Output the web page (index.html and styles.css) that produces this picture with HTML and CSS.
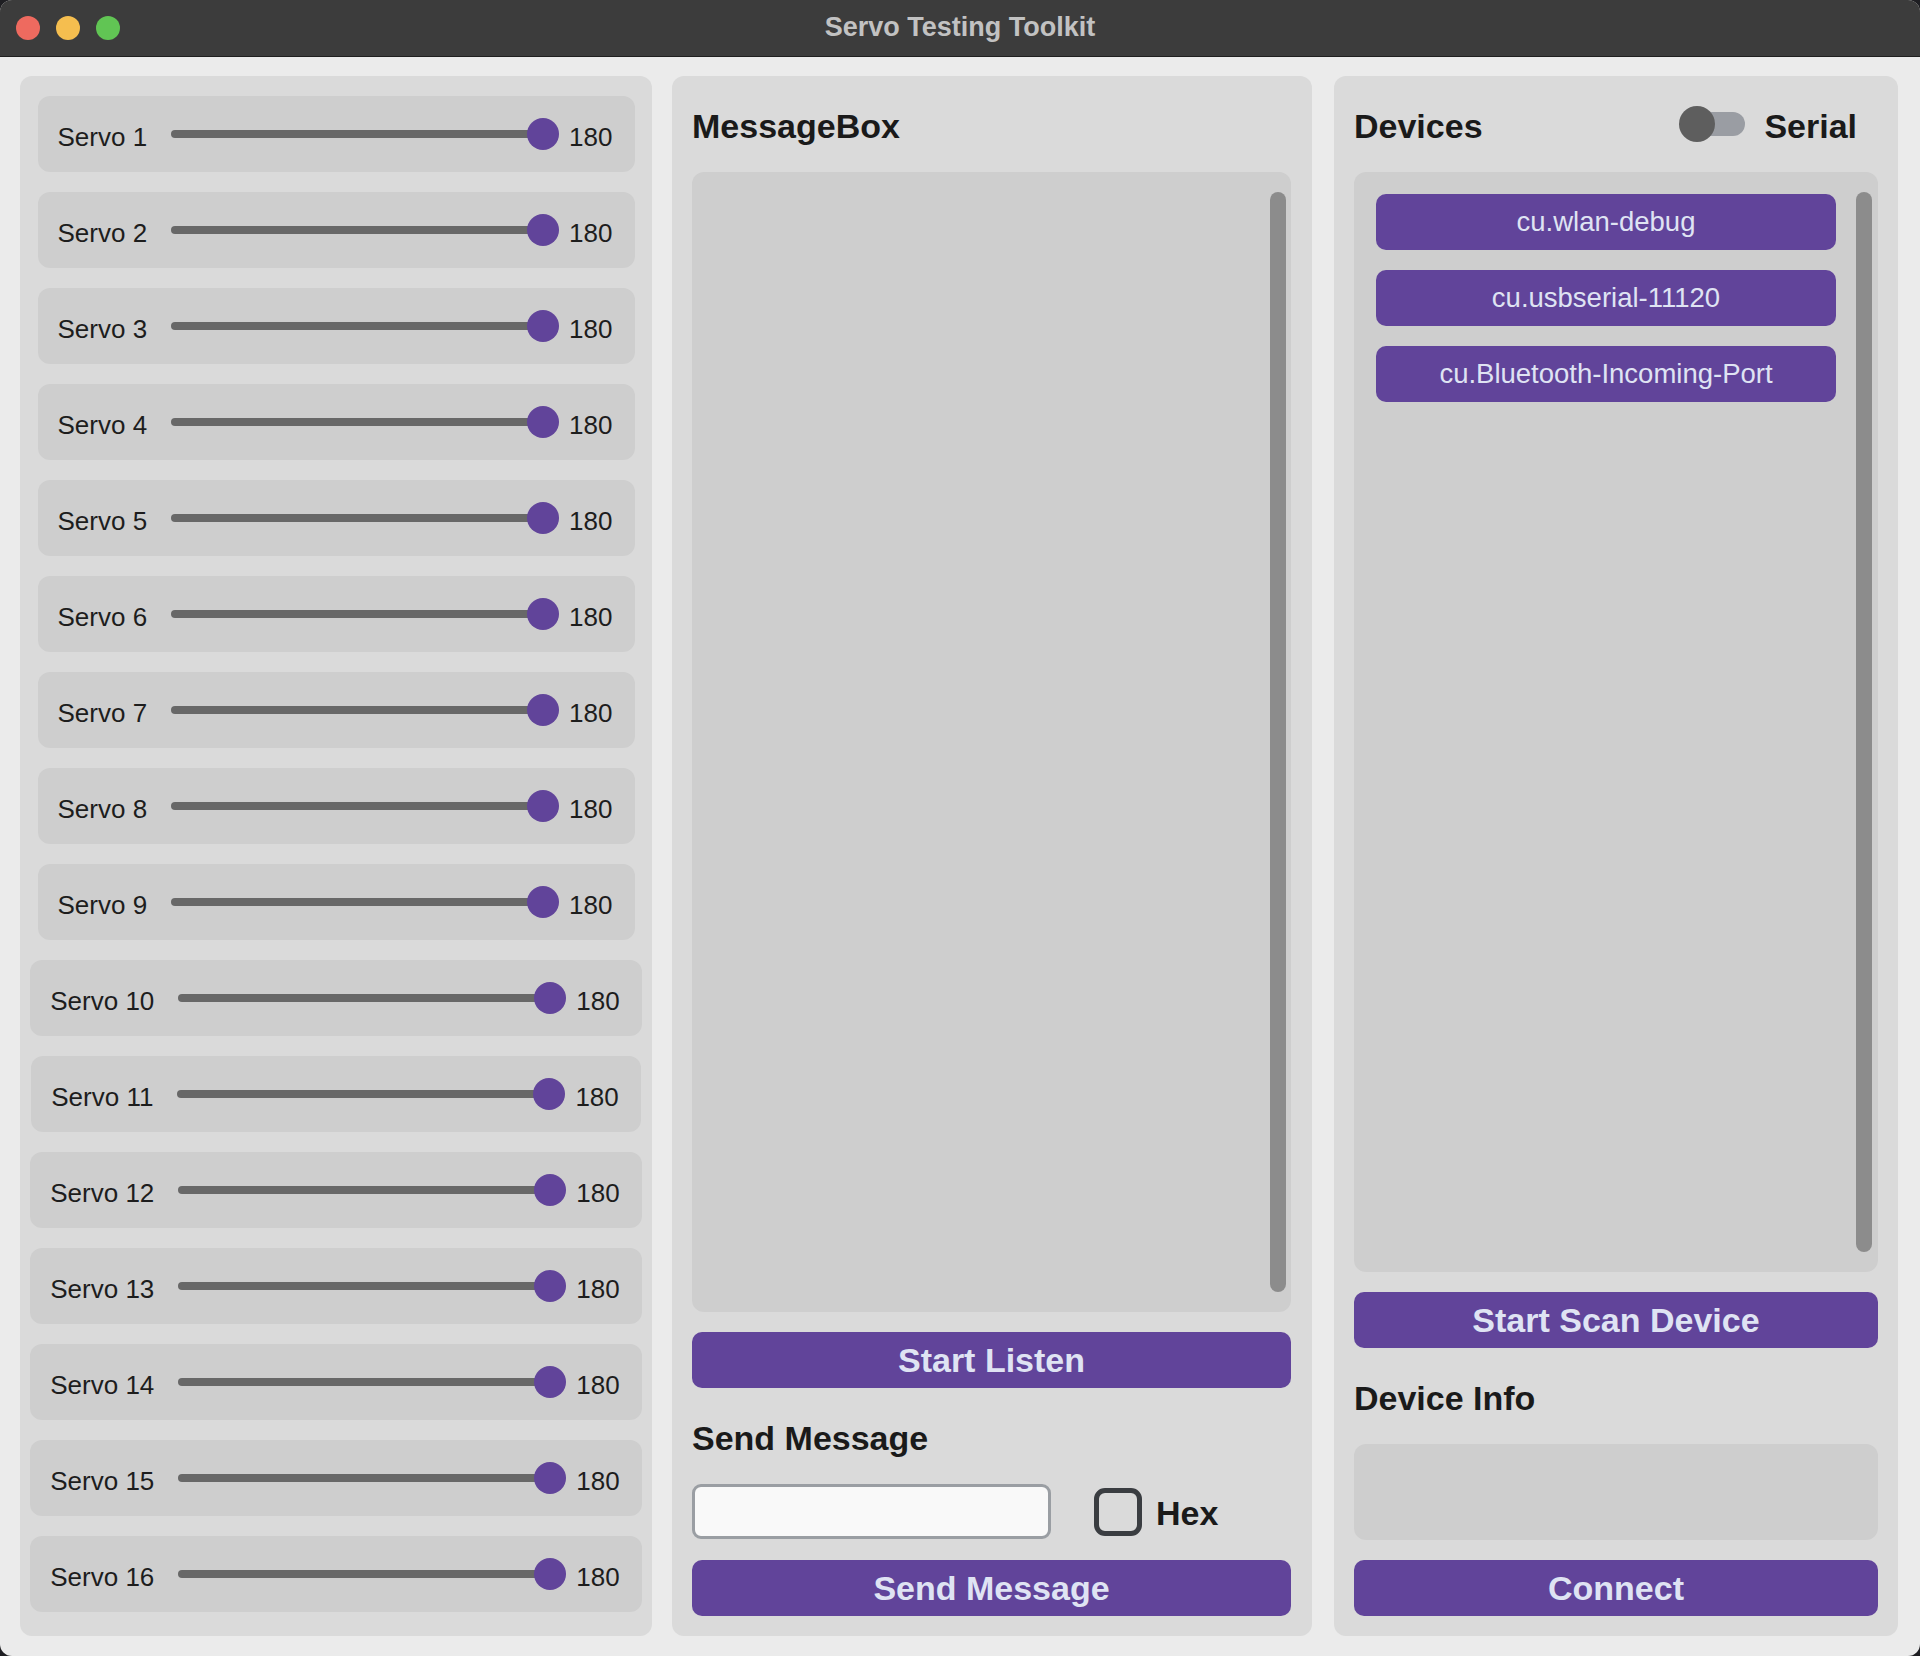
FILE: index.html
```html
<!DOCTYPE html>
<html lang="en">
<head>
<meta charset="utf-8">
<title>Servo Testing Toolkit</title>
<link rel="stylesheet" href="styles.css">
</head>
<body>
<div class="window">
  <header class="titlebar">
    <div class="lights">
      <span class="light red"></span>
      <span class="light yellow"></span>
      <span class="light green"></span>
    </div>
    <div class="title">Servo Testing Toolkit</div>
    <div></div>
  </header>
  <main class="content">
    <section class="panel servos">
      <div class="servo"><span class="lbl">Servo 1</span><div class="slider"><div class="track"></div><div class="thumb"></div></div><span class="val">180</span></div>
      <div class="servo"><span class="lbl">Servo 2</span><div class="slider"><div class="track"></div><div class="thumb"></div></div><span class="val">180</span></div>
      <div class="servo"><span class="lbl">Servo 3</span><div class="slider"><div class="track"></div><div class="thumb"></div></div><span class="val">180</span></div>
      <div class="servo"><span class="lbl">Servo 4</span><div class="slider"><div class="track"></div><div class="thumb"></div></div><span class="val">180</span></div>
      <div class="servo"><span class="lbl">Servo 5</span><div class="slider"><div class="track"></div><div class="thumb"></div></div><span class="val">180</span></div>
      <div class="servo"><span class="lbl">Servo 6</span><div class="slider"><div class="track"></div><div class="thumb"></div></div><span class="val">180</span></div>
      <div class="servo"><span class="lbl">Servo 7</span><div class="slider"><div class="track"></div><div class="thumb"></div></div><span class="val">180</span></div>
      <div class="servo"><span class="lbl">Servo 8</span><div class="slider"><div class="track"></div><div class="thumb"></div></div><span class="val">180</span></div>
      <div class="servo"><span class="lbl">Servo 9</span><div class="slider"><div class="track"></div><div class="thumb"></div></div><span class="val">180</span></div>
      <div class="servo"><span class="lbl">Servo 10</span><div class="slider"><div class="track"></div><div class="thumb"></div></div><span class="val">180</span></div>
      <div class="servo"><span class="lbl">Servo 11</span><div class="slider"><div class="track"></div><div class="thumb"></div></div><span class="val">180</span></div>
      <div class="servo"><span class="lbl">Servo 12</span><div class="slider"><div class="track"></div><div class="thumb"></div></div><span class="val">180</span></div>
      <div class="servo"><span class="lbl">Servo 13</span><div class="slider"><div class="track"></div><div class="thumb"></div></div><span class="val">180</span></div>
      <div class="servo"><span class="lbl">Servo 14</span><div class="slider"><div class="track"></div><div class="thumb"></div></div><span class="val">180</span></div>
      <div class="servo"><span class="lbl">Servo 15</span><div class="slider"><div class="track"></div><div class="thumb"></div></div><span class="val">180</span></div>
      <div class="servo"><span class="lbl">Servo 16</span><div class="slider"><div class="track"></div><div class="thumb"></div></div><span class="val">180</span></div>
    </section>

    <section class="panel messages">
      <h2 class="heading">MessageBox</h2>
      <div class="textbox msgbox"><div class="scrollbar"></div></div>
      <button class="btn">Start Listen</button>
      <h2 class="heading sub">Send Message</h2>
      <div class="send-row">
        <div class="entry"></div>
        <span class="checkbox"></span>
        <span class="hex">Hex</span>
      </div>
      <button class="btn send">Send Message</button>
    </section>

    <section class="panel devices">
      <div class="dev-head">
        <h2 class="heading">Devices</h2>
        <div class="serial">
          <div class="switch"><span class="knob"></span><span class="sw-track"></span></div>
          <span class="serial-lbl">Serial</span>
        </div>
      </div>
      <div class="textbox devlist">
        <div class="dev-items">
          <button class="dev">cu.wlan-debug</button>
          <button class="dev">cu.usbserial-11120</button>
          <button class="dev">cu.Bluetooth-Incoming-Port</button>
        </div>
        <div class="scrollbar devscroll"></div>
      </div>
      <button class="btn">Start Scan Device</button>
      <h2 class="heading sub">Device Info</h2>
      <div class="textbox info"></div>
      <button class="btn send">Connect</button>
    </section>
  </main>
</div>
</body>
</html>
```

FILE: styles.css
```css
* { box-sizing: border-box; }

html, body {
  margin: 0;
  padding: 0;
  background: #1e1e22;
}

body {
  font-family: "Liberation Sans", Arial, sans-serif;
  color: #1c1c1c;
}

.window {
  width: 1920px;
  height: 1656px;
  border-radius: 12px;
  overflow: hidden;
  background: #ebebeb;
  display: flex;
  flex-direction: column;
}

.titlebar {
  height: 57px;
  flex: none;
  background: #3c3c3c;
  border-bottom: 1px solid #1f1f1f;
  display: grid;
  grid-template-columns: 1fr auto 1fr;
  align-items: center;
}

.lights {
  display: flex;
  gap: 16px;
  padding-left: 16px;
}

.light {
  width: 24px;
  height: 24px;
  border-radius: 50%;
  display: block;
}
.red { background: #ee6a5f; }
.yellow { background: #f5be4f; }
.green { background: #61c554; }

.title {
  font-weight: 700;
  font-size: 27px;
  line-height: 32px;
  color: #c2c2c2;
  margin-top: -2px;
}

.content {
  flex: 1;
  display: flex;
  padding: 19px 22px 20px 20px;
  gap: 20px;
}

.panel {
  background: #dadada;
  border-radius: 12px;
}

/* Servos */
.servos {
  width: 632px;
  display: flex;
  flex-direction: column;
  align-items: center;
  padding-top: 20px;
  gap: 20px;
}

.servo {
  height: 76px;
  background: #cecece;
  border-radius: 12px;
  display: flex;
  align-items: center;
  padding: 0 22px 0 20px;
}

.lbl, .val {
  font-size: 26px;
  line-height: 30px;
  padding-top: 5px;
  color: #1d1d1d;
  white-space: nowrap;
}

.slider {
  width: 388px;
  height: 32px;
  display: flex;
  align-items: center;
  margin: 0 10px 0 24px;
}

.track {
  flex: 1;
  height: 8px;
  border-radius: 4px;
  background: #686868;
}

.thumb {
  width: 32px;
  height: 32px;
  border-radius: 50%;
  background: #61449a;
  margin-left: -16px;
  flex: none;
}

/* Shared */
.heading {
  margin: 0;
  font-size: 34px;
  line-height: 40px;
  height: 40px;
  font-weight: 700;
  color: #1a1a1a;
}

.textbox {
  background: #cecece;
  border-radius: 12px;
}

.scrollbar {
  width: 16px;
  border-radius: 8px;
  background: #8c8c8c;
}

.btn {
  display: block;
  width: 100%;
  height: 56px;
  border: none;
  border-radius: 10px;
  background: #61449a;
  color: #dfe3f3;
  font-family: "Liberation Sans", Arial, sans-serif;
  font-weight: 700;
  font-size: 34px;
  line-height: 56px;
  padding: 0;
  text-align: center;
  flex: none;
}

/* Messages */
.messages {
  width: 640px;
  display: flex;
  flex-direction: column;
  padding: 30px 21px 20px 20px;
}

.msgbox {
  flex: 1;
  margin: 26px 0 20px;
  display: flex;
  justify-content: flex-end;
  padding: 20px 5px 20px 0;
}

.heading.sub {
  margin: 30px 0 26px;
}

.send-row {
  height: 55px;
  display: flex;
  align-items: center;
  margin-bottom: 21px;
}

.entry {
  width: 359px;
  height: 55px;
  border: 3px solid #9a9ea3;
  border-radius: 9px;
  background: #f9f9f9;
}

.checkbox {
  width: 48px;
  height: 48px;
  border: 5px solid #3a3d41;
  border-radius: 11px;
  margin-left: 43px;
  display: block;
}

.hex {
  font-size: 34px;
  font-weight: 700;
  margin-left: 14px;
  padding-top: 4px;
  color: #1a1a1a;
}

/* Devices */
.devices {
  width: 564px;
  margin-left: 2px;
  display: flex;
  flex-direction: column;
  padding: 30px 20px 20px 20px;
}

.dev-head {
  display: flex;
  justify-content: space-between;
  align-items: center;
  height: 40px;
}

.serial {
  display: flex;
  align-items: center;
  padding-right: 21px;
}

.switch {
  display: flex;
  align-items: center;
  margin-bottom: 4px;
}

.knob {
  position: relative;
  z-index: 1;
  width: 36px;
  height: 36px;
  border-radius: 50%;
  background: #5e5e5e;
  display: block;
}

.sw-track {
  width: 60px;
  height: 24px;
  border-radius: 12px;
  background: #9a9da3;
  margin-left: -30px;
  display: block;
}

.serial-lbl {
  font-size: 34px;
  font-weight: 700;
  margin-left: 19px;
  color: #1a1a1a;
}

.devlist {
  flex: 1;
  margin: 26px 0 20px;
  display: flex;
  padding: 20px 6px 20px 22px;
  gap: 20px;
}

.dev-items {
  width: 460px;
  margin-top: 2px;
  display: flex;
  flex-direction: column;
  gap: 20px;
}

.dev {
  height: 56px;
  border: none;
  border-radius: 10px;
  background: #61449a;
  color: #dfe3f3;
  font-family: "Liberation Sans", Arial, sans-serif;
  font-size: 27.5px;
  padding: 0;
  text-align: center;
}

.info {
  height: 96px;
  margin-bottom: 20px;
  flex: none;
}
```
